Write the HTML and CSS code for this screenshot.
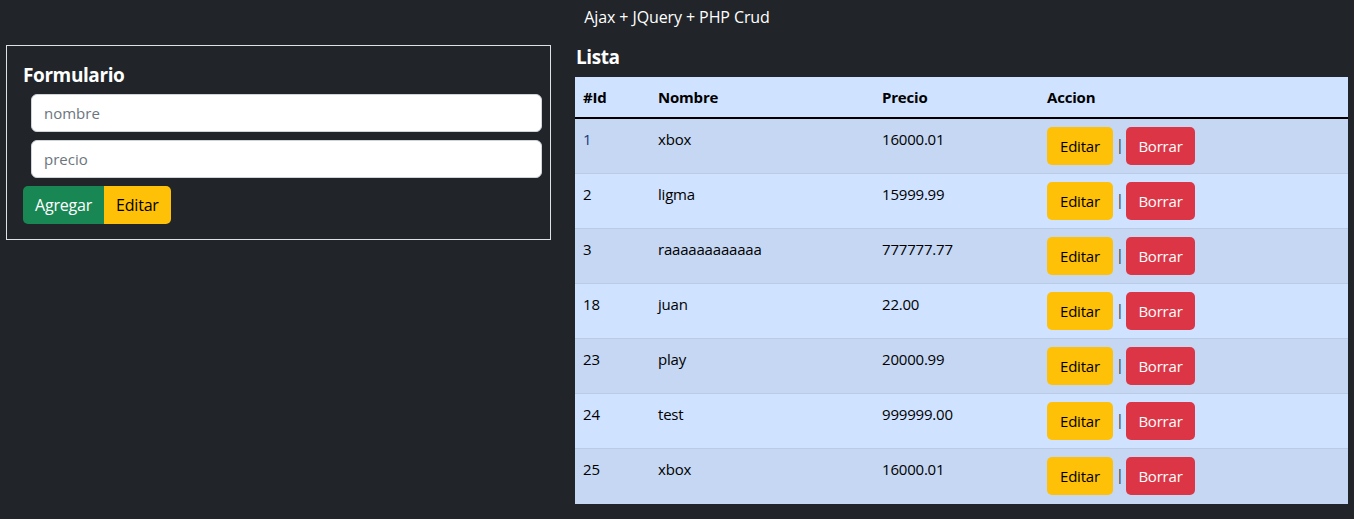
FILE: index.html
```html
<!DOCTYPE html>
<html lang="es">
<head>
<meta charset="utf-8">
<title>Ajax + JQuery + PHP Crud</title>
<link rel="stylesheet" href="styles.css">
</head>
<body>
<header class="topbar">Ajax + JQuery + PHP Crud</header>
<main class="layout">
  <section class="form-box">
    <h4 class="title">Formulario</h4>
    <div class="fields">
      <input class="field" type="text" placeholder="nombre">
      <input class="field" type="text" placeholder="precio">
    </div>
    <div class="btn-group">
      <button class="btn btn-success btn-left">Agregar</button>
      <button class="btn btn-warning btn-right">Editar</button>
    </div>
  </section>
  <section class="list">
    <h4 class="title list-title">Lista</h4>
    <table class="table">
      <thead>
        <tr><th class="c-id">#Id</th><th class="c-name">Nombre</th><th class="c-price">Precio</th><th>Accion</th></tr>
      </thead>
      <tbody>
        <tr class="odd"><td class="first-id">1</td><td>xbox</td><td>16000.01</td><td><button class="btn btn-warning">Editar</button> <span class="sep">|</span> <button class="btn btn-danger">Borrar</button></td></tr>
        <tr><td>2</td><td>ligma</td><td>15999.99</td><td><button class="btn btn-warning">Editar</button> <span class="sep">|</span> <button class="btn btn-danger">Borrar</button></td></tr>
        <tr class="odd"><td>3</td><td>raaaaaaaaaaaa</td><td>777777.77</td><td><button class="btn btn-warning">Editar</button> <span class="sep">|</span> <button class="btn btn-danger">Borrar</button></td></tr>
        <tr><td>18</td><td>juan</td><td>22.00</td><td><button class="btn btn-warning">Editar</button> <span class="sep">|</span> <button class="btn btn-danger">Borrar</button></td></tr>
        <tr class="odd"><td>23</td><td>play</td><td>20000.99</td><td><button class="btn btn-warning">Editar</button> <span class="sep">|</span> <button class="btn btn-danger">Borrar</button></td></tr>
        <tr><td>24</td><td>test</td><td>999999.00</td><td><button class="btn btn-warning">Editar</button> <span class="sep">|</span> <button class="btn btn-danger">Borrar</button></td></tr>
        <tr class="odd last"><td>25</td><td>xbox</td><td>16000.01</td><td><button class="btn btn-warning">Editar</button> <span class="sep">|</span> <button class="btn btn-danger">Borrar</button></td></tr>
      </tbody>
    </table>
  </section>
</main>
</body>
</html>
```
FILE: styles.css
```css
* { box-sizing: border-box; }
html, body { margin: 0; padding: 0; }
body {
  background: #212529;
  color: #fff;
  font-family: "Open Sans", "Noto Sans", "Liberation Sans", sans-serif;
  font-size: 15px;
  line-height: 1.5;
  width: 1354px;
  height: 519px;
  overflow: hidden;
}
.topbar {
  text-align: center;
  height: 36px;
  padding-top: 5px;
  font-size: 16px;
  letter-spacing: -0.1px;
}
.layout {
  display: flex;
  align-items: flex-start;
  padding: 9px 6px 0 6px;
  gap: 24px;
}
.form-box {
  width: 545px;
  flex: none;
  border: 1px solid #dee2e6;
  padding: 15px 8px 15px 16px;
}
.title {
  margin: 0;
  font-size: 19px;
  font-weight: 700;
  line-height: 1.2;
  letter-spacing: -0.4px;
}
.form-box .title { margin-bottom: 7px; margin-top: 3px; }
.fields {
  display: flex;
  flex-direction: column;
  gap: 8px;
  padding-left: 8px;
  margin-bottom: 8px;
}
.field {
  height: 38px;
  width: 100%;
  border: 1px solid #ced4da;
  border-radius: 6px;
  background: #fff;
  padding: 0 12px;
  font-family: inherit;
  font-size: 15px;
  color: #212529;
}
.field::placeholder { color: #6c757d; }
.btn-group { display: flex; }
.btn {
  height: 38px;
  border: 1px solid transparent;
  border-radius: 5px;
  padding: 0 12px;
  font-family: inherit;
  font-size: 15px;
  letter-spacing: -0.2px;
  cursor: pointer;
  vertical-align: middle;
}
.btn-group .btn { font-size: 16px; padding: 0 11px; letter-spacing: -0.2px; }
.btn-left { border-radius: 5px 0 0 5px; }
.btn-right { border-radius: 0 5px 5px 0; }
.btn-success { background: #198754; color: #fff; }
.btn-warning { background: #ffc107; color: #000; }
.btn-danger { background: #dc3545; color: #fff; padding: 0 11px; }
.list {
  flex: 1;
}
.list-title { margin: 1px 0 9px 1px; padding-top: 1px; line-height: 21px; }
.table {
  width: 773px;
  border-collapse: collapse;
  color: #000;
}
.table th, .table td {
  text-align: left;
  vertical-align: top;
  padding: 8px;
  font-size: 15px;
  line-height: 24px;
  letter-spacing: -0.2px;
}
.table thead tr { background: #cfe2ff; }
.table th {
  font-weight: 700;
  border-bottom: 2px solid #000;
}
.table td { height: 55px; border-bottom: 1px solid #bacbe6; }
.table tbody tr { background: #cfe2ff; }
.table tbody tr.odd { background: #c5d7f2; }
.table tbody tr.last td { border-bottom: 1px solid #c5d7f2; }
.c-id { width: 75px; }
.c-name { width: 224px; }
.c-price { width: 165px; }
.first-id { color: #1b3a7a; }
.sep { color: #333; margin: 0 -1px; }
```
